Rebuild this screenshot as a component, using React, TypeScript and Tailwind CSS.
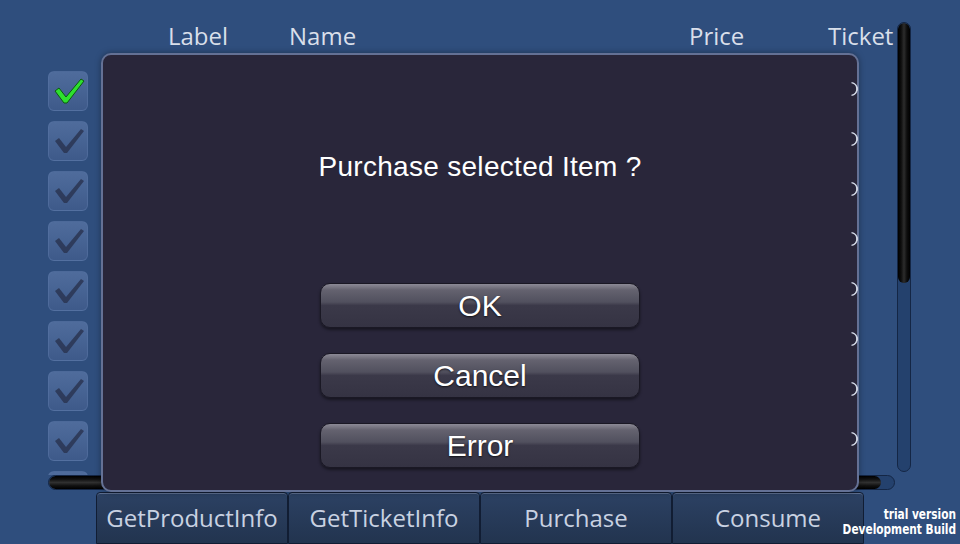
import React from "react";

const rows = [0, 1, 2, 3, 4, 5, 6, 7, 8];
const tabs = ["GetProductInfo", "GetTicketInfo", "Purchase", "Consume"];
const choices = ["OK", "Cancel", "Error"];

const Check = ({ on }: { on: boolean }) => (
    <svg width="40" height="40" viewBox="0 0 40 40" className="absolute left-0 top-0">
        <polygon
            points="6,19 10,16 17,25 32,7 35,9 18,31 15,31"
            fill={on ? "#2ee02e" : "#2a3552"}
            fillOpacity={on ? 1 : 0.85}
            stroke={on ? "#0c5a10" : "none"}
            strokeWidth="1"
        />
    </svg>
);

const App = () => {
    return (
        <div className="relative w-[960px] h-[544px] overflow-hidden bg-[#2f4e7d] font-['Open_Sans',sans-serif]">
            <div className="flex h-[475px] pl-[48px]">
                <div className="w-[849px] h-[475px] overflow-hidden pt-[20px]">
                    <div className="flex h-[32px] leading-[32px] text-[24px] text-[#d9dfea] mb-[19px]">
                        <div className="w-[120px]"></div>
                        <div className="w-[121px]">Label</div>
                        <div className="w-[400px]">Name</div>
                        <div className="w-[139px]">Price</div>
                        <div>Ticket</div>
                    </div>
                    {rows.map((r) => (
                        <div key={r} className="flex h-[50px]">
                            <div className="relative w-[40px] h-[40px] rounded-[6px] border border-[#5673a3]/60 bg-[linear-gradient(to_bottom,#4f6c9c,#3e5a8a)]">
                                <Check on={r === 0} />
                            </div>
                            <svg width="11" height="16" viewBox="0 0 11 16" className="relative z-20 ml-[762px] mt-[10px]">
                                <path
                                    d="M1.5 1.6 A6.5 6.5 0 0 1 1.5 14.4 A5.2 5.2 0 0 0 1.5 1.6 Z"
                                    fill="#d3d9e7"
                                />
                                <path d="M1.5 1.6 A6.5 6.5 0 0 1 1.5 14.4" fill="none" stroke="#d3d9e7" strokeWidth="1.4" />
                            </svg>
                        </div>
                    ))}
                </div>
                <div className="w-[14px] h-[450px] mt-[22px] rounded-full border border-[#142645] bg-[#24416d] overflow-hidden">
                    <div className="h-[260px] rounded-full bg-[linear-gradient(to_right,#000_0%,#0d0d0d_25%,#2c2c2c_50%,#0d0d0d_75%,#000_100%)]"></div>
                </div>
            </div>

            <div className="pl-[48px]">
                <div className="w-[847px] h-[15px] rounded-full border border-[#142645] bg-[#24416d] overflow-hidden">
                    <div className="w-[832px] h-full rounded-full bg-[linear-gradient(to_bottom,#000_0%,#111_25%,#303030_50%,#111_75%,#000_100%)]"></div>
                </div>
            </div>

            <div className="flex mt-[2px] h-[52px] pl-[96px]">
                {tabs.map((t) => (
                    <div
                        key={t}
                        className="w-[192px] h-[52px] rounded-t-[4px] border border-[#111d33] shadow-[inset_0_1px_0_#5d6f90] bg-[linear-gradient(to_bottom,#2c4163,#22344f)] flex items-center justify-center text-[24px] text-[#c9d2e2]"
                    >
                        {t}
                    </div>
                ))}
            </div>

            <div className="absolute right-[4px] bottom-[7px] z-30 flex flex-col items-end whitespace-nowrap origin-bottom-right scale-x-[0.84] font-['DejaVu_Sans_Condensed','DejaVu_Sans',sans-serif] font-bold text-[14px] leading-[15px] text-white">
                <div>trial version</div>
                <div>Development Build</div>
            </div>

            <div className="absolute left-[101px] top-[53px] z-10 w-[758px] h-[439px] rounded-[10px] border-2 border-[#7384ad]/80 bg-[#29263a] shadow-[0_0_6px_rgba(0,0,0,0.35)] flex flex-col items-center pt-[96px] font-['Liberation_Sans',sans-serif]">
                <div className="text-[28px] leading-[32px] tracking-[0.3px] text-white">Purchase selected Item ?</div>
                <div className="mt-[100px] flex flex-col gap-[25px]">
                    {choices.map((c) => (
                        <div
                            key={c}
                            className="w-[320px] h-[45px] rounded-[10px] border border-[#1a1824] shadow-[0_2px_3px_rgba(0,0,0,0.45)] bg-[linear-gradient(to_bottom,#8c8a96_0%,#64626f_14%,#51505e_42%,#3b3949_50%,#353343_100%)] flex items-center justify-center text-[30px] leading-[45px] text-white [text-shadow:0_1px_2px_rgba(0,0,0,0.7)]"
                        >
                            {c}
                        </div>
                    ))}
                </div>
            </div>
        </div>
    );
};

export default App;
